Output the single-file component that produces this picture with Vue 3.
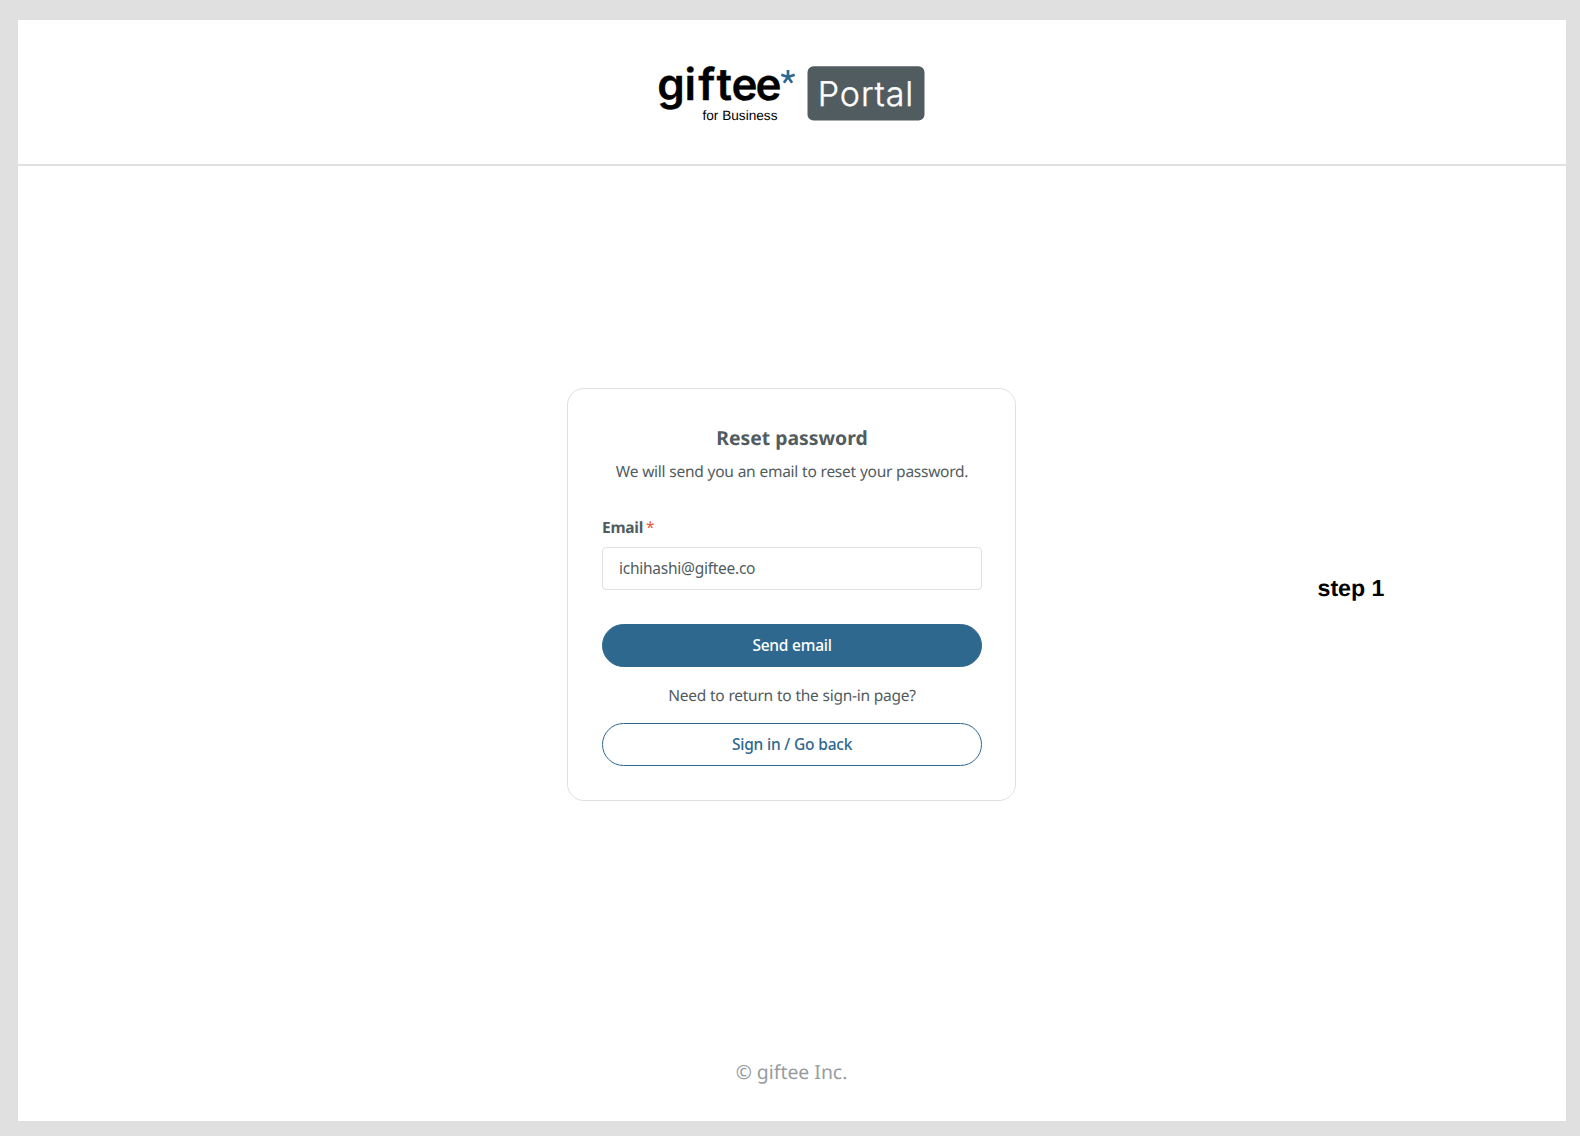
<template>
  <div class="page">
    <header class="header">
      <svg class="logo" width="270" height="80" viewBox="0 -10 270 80" role="img" aria-label="giftee for Business Portal">
        <text class="logo-name" x="0.2 27.6 41.2 59.4 74.6 98.6" y="35.8">giftee</text>
        <g class="logo-star">
          <path d="M131 13V6M131 13L137.7 10.8M131 13L135.1 18.7M131 13L126.9 18.7M131 13L124.3 10.8" />
        </g>
        <text class="logo-sub" x="45.5" y="56.3" textLength="75" lengthAdjust="spacingAndGlyphs">for Business</text>
        <rect class="logo-badge" x="150.5" y="2.3" width="117" height="54.2" rx="6" />
        <text class="logo-portal" x="160.8" y="42" textLength="95.5" lengthAdjust="spacing">Portal</text>
      </svg>
    </header>

    <main class="main">
      <form class="card" @submit.prevent="sendEmail">
        <h1 class="title">Reset password</h1>
        <p class="description">We will send you an email to reset your password.</p>
        <label class="label" for="email">Email<span class="required">*</span></label>
        <input v-model="email" id="email" type="text" class="input" />
        <button type="submit" class="button button-primary">Send email</button>
        <p class="hint">Need to return to the sign-in page?</p>
        <button type="button" class="button button-outline">Sign in / Go back</button>
      </form>
      <span class="step">step 1</span>
    </main>

    <footer class="footer">© giftee Inc.</footer>
  </div>
</template>

<script setup>
import { ref } from 'vue';

const email = ref('ichihashi@giftee.co');
const isSent = ref(false);

// Function to submit the reset form
const sendEmail = () => {
  if (!email.value) return;
  isSent.value = true;
};
</script>

<style>
body {
  margin: 0;
  background-color: #e0e0e0;
}
</style>

<style scoped>
* {
  box-sizing: border-box;
  margin: 0;
}

.page {
  height: 1136px;
  border: solid #e0e0e0;
  border-width: 20px 14px 15px 18px;
  background-color: #fff;
  color: #515c60;
  font-family: "Noto Sans", sans-serif;
  font-size: 15.5px;
  letter-spacing: -0.26px;
  word-spacing: 0.25px;
  text-rendering: geometricPrecision;
  display: flex;
  flex-direction: column;
}

.header {
  height: 146px;
  flex-shrink: 0;
  border-bottom: 2px solid #e0e0e0;
  display: flex;
  justify-content: center;
  padding-top: 34px;
}

.logo {
  display: block;
  letter-spacing: 0;
  word-spacing: 0;
}

.logo-name {
  font: 600 44px Inter, sans-serif;
  fill: #000;
  stroke: #000;
  stroke-width: 0.3;
}

.logo-star {
  fill: none;
  stroke: #2f688f;
  stroke-width: 2.7;
}

.logo-sub {
  font: 400 13.6px "Liberation Sans", sans-serif;
  fill: #000;
}

.logo-badge {
  fill: #515c60;
}

.logo-portal {
  font: 300 34px Inter, sans-serif;
  fill: #fff;
  stroke: #fff;
  stroke-width: 0.4;
}

.main {
  display: grid;
  grid-template-columns: 1fr 449px 1fr;
  align-items: start;
  padding: 222px 1px 0 0;
  flex: 1;
}

.card {
  grid-column: 2;
  height: 413px;
  padding: 34px 33px 0 34px;
  border: 1px solid #e0e0e0;
  border-radius: 17px;
  display: flex;
  flex-direction: column;
}

.title {
  font-size: 19.35px;
  font-weight: 700;
  letter-spacing: 0;
  word-spacing: 0;
  line-height: 30px;
  text-align: center;
}

.description {
  line-height: 24px;
  margin-top: 6px;
  text-align: center;
}

.label {
  font-weight: 700;
  line-height: 24px;
  margin-top: 32px;
}

.required {
  margin-left: 3px;
  color: #e8573a;
  font-weight: 400;
}

.input {
  height: 43px;
  margin-top: 8px;
  padding: 0 16px 2px;
  border: 1px solid #e0e0e0;
  border-radius: 4px;
  outline: none;
  color: inherit;
  font: inherit;
  letter-spacing: inherit;
}

.button {
  height: 43px;
  padding-bottom: 2px;
  border: 1px solid #2f688f;
  border-radius: 22px;
  font: inherit;
  font-weight: 500;
  letter-spacing: inherit;
  word-spacing: inherit;
  cursor: pointer;
}

.button-primary {
  margin-top: 34px;
  background-color: #2f688f;
  color: #fff;
}

.hint {
  line-height: 24px;
  margin: 16px 0;
  text-align: center;
}

.button-outline {
  background-color: #fff;
  color: #2f688f;
}

.step {
  grid-column: 3;
  justify-self: start;
  margin: 187px 0 0 301.5px;
  color: #000;
  font: bold 23.2px "Liberation Sans", sans-serif;
  letter-spacing: 0;
  word-spacing: 0;
}

.footer {
  height: 64px;
  padding-right: 1px;
  color: #979d9f;
  font-size: 19.4px;
  letter-spacing: 0;
  word-spacing: 0;
  line-height: 30px;
  text-align: center;
}
</style>
